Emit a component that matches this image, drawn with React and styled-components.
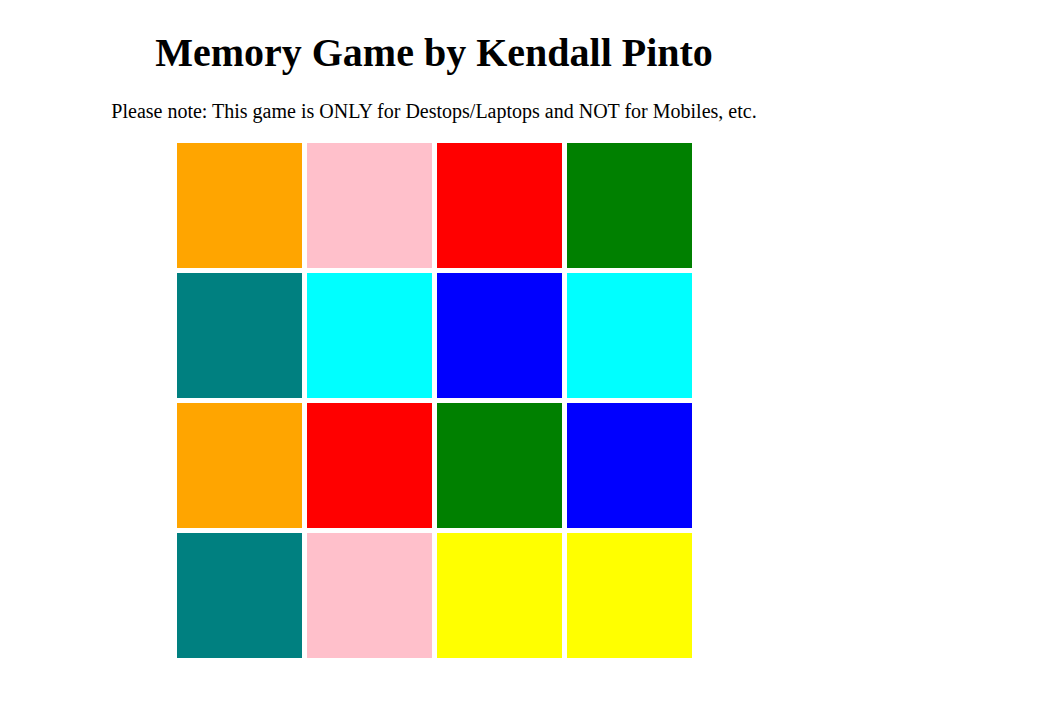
import * as React from "react";
import styled, { createGlobalStyle } from "styled-components";

const GlobalStyle = createGlobalStyle`
  body {
    margin: 8px;
    background: #ffffff;
    font-family: "Liberation Serif", "Times New Roman", serif;
    color: #000000;
  }
`;

const Page = styled.div`
  width: 852px;
  display: flex;
  flex-direction: column;
  align-items: center;
`;

const Title = styled.h1`
  margin: 22px 0 0;
  font-size: 40px;
  font-weight: bold;
  line-height: 46px;
`;

const Note = styled.p`
  margin: 24px 0 0;
  font-size: 20px;
  line-height: 23px;
`;

const Board = styled.div`
  margin-top: 20px;
  display: grid;
  grid-template-columns: repeat(4, 125px);
  grid-auto-rows: 125px;
  gap: 5px;
`;

const Tile = styled.div`
  background: ${(p) => p.color};
`;

// colour layout of the board, row by row
const tiles = [
  "orange", "pink", "red", "green",
  "teal", "cyan", "blue", "cyan",
  "orange", "red", "green", "blue",
  "teal", "pink", "yellow", "yellow",
];

export default function App() {
  return (
    <Page>
      <GlobalStyle />
      <Title>Memory Game by Kendall Pinto</Title>
      <Note>Please note: This game is ONLY for Destops/Laptops and NOT for Mobiles, etc.</Note>
      <Board>
        {tiles.map((c, i) => (
          <Tile key={i} color={c} />
        ))}
      </Board>
    </Page>
  );
}
